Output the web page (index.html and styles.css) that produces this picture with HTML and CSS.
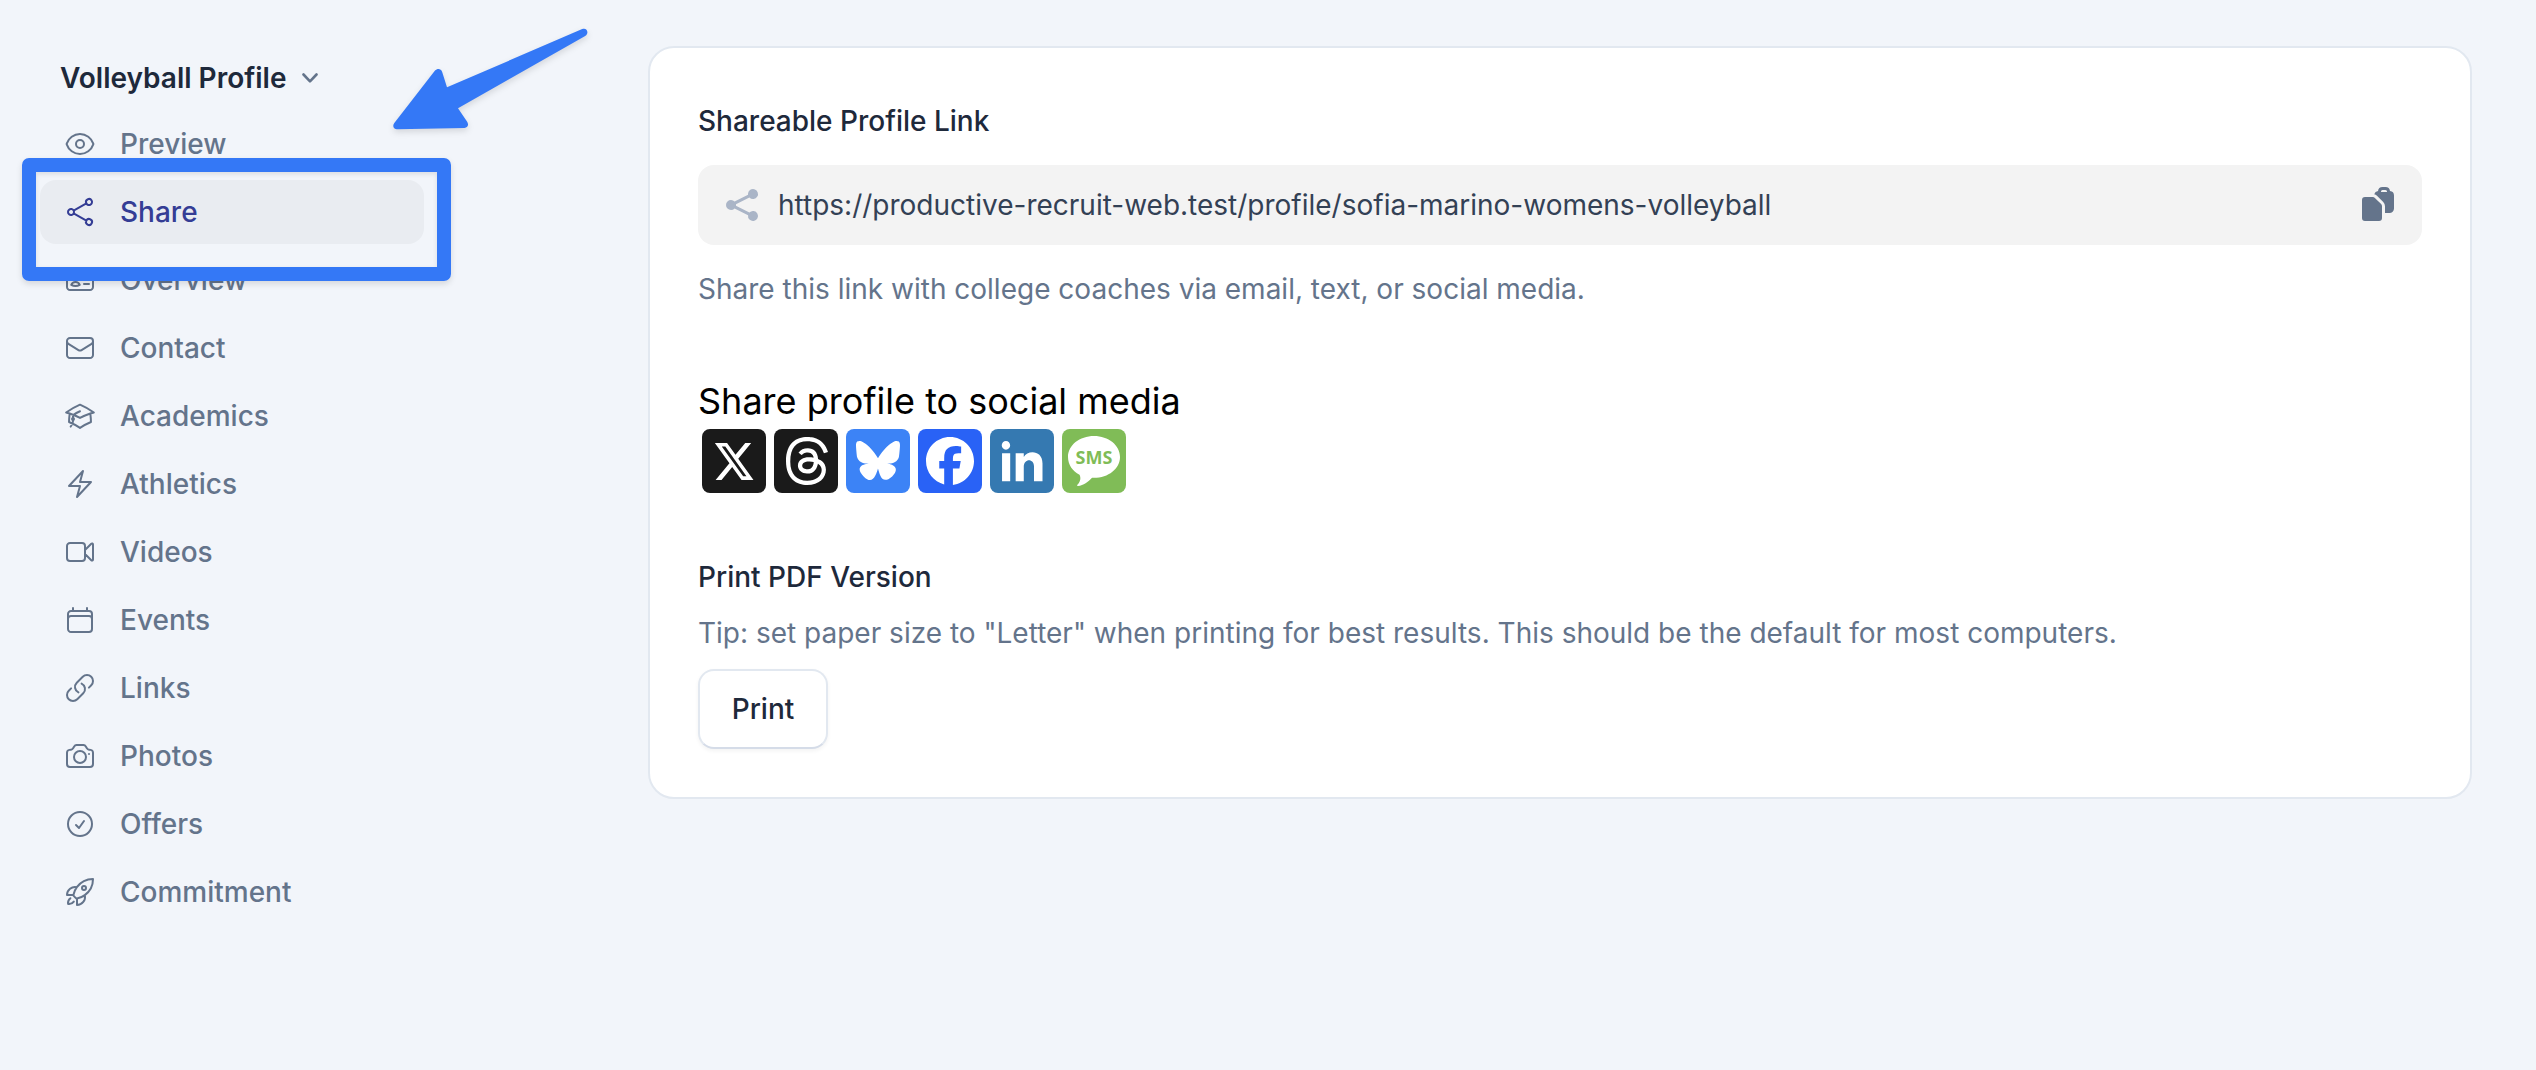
FILE: index.html
```
<!DOCTYPE html>
<html lang="en">
<head>
    <meta charset="UTF-8">
    <meta name="viewport" content="width=device-width, initial-scale=1.0">
    <title>Volleyball Profile - Share</title>

    <link rel="stylesheet" href="styles.css">
</head>
<body>

    <aside class="sidebar">
        <button type="button" class="profile-switch">
            Volleyball Profile
            <svg class="chevron" viewBox="0 0 16 10"><path d="M1.5 1.5 8 8.3l6.5-6.8"/></svg>
        </button>

        <nav class="menu">
            <a href="#" class="menu-item">
                <svg viewBox="0 0 24 24"><path d="M2.036 12.322a1.012 1.012 0 0 1 0-.639C3.423 7.51 7.36 4.5 12 4.5c4.638 0 8.573 3.007 9.963 7.178.07.207.07.431 0 .639C20.577 16.49 16.64 19.5 12 19.5c-4.638 0-8.573-3.007-9.963-7.178Z"/><path d="M15 12a3 3 0 1 1-6 0 3 3 0 0 1 6 0Z"/></svg>
                Preview
            </a>
            <a href="#" class="menu-item active">
                <svg viewBox="0 0 24 24"><path d="M7.217 10.907a2.25 2.25 0 1 0 0 2.186m0-2.186c.18.324.283.696.283 1.093s-.103.77-.283 1.093m0-2.186 9.566-5.314m-9.566 7.5 9.566 5.314m0 0a2.25 2.25 0 1 0 3.935 2.186 2.25 2.25 0 0 0-3.935-2.186Zm0-12.814a2.25 2.25 0 1 0 3.933-2.185 2.25 2.25 0 0 0-3.933 2.185Z"/></svg>
                Share
                <span class="highlight-box"></span>
            </a>
            <a href="#" class="menu-item">
                <svg viewBox="0 0 24 24"><path d="M15 9h3.75M15 12h3.75M15 15h3.75M4.5 19.5h15a2.25 2.25 0 0 0 2.25-2.25V6.75A2.25 2.25 0 0 0 19.5 4.5h-15a2.25 2.25 0 0 0-2.25 2.25v10.5A2.25 2.25 0 0 0 4.5 19.5Zm6-10.125a1.875 1.875 0 1 1-3.75 0 1.875 1.875 0 0 1 3.75 0Zm1.294 6.336a6.721 6.721 0 0 1-3.17.789 6.721 6.721 0 0 1-3.168-.789 3.376 3.376 0 0 1 6.338 0Z"/></svg>
                Overview
            </a>
            <a href="#" class="menu-item">
                <svg viewBox="0 0 24 24"><path d="M21.75 6.75v10.5a2.25 2.25 0 0 1-2.25 2.25h-15a2.25 2.25 0 0 1-2.25-2.25V6.75m19.5 0A2.25 2.25 0 0 0 19.5 4.5h-15a2.25 2.25 0 0 0-2.25 2.25m19.5 0v.243a2.25 2.25 0 0 1-1.07 1.916l-7.5 4.615a2.25 2.25 0 0 1-2.36 0L3.32 8.91a2.25 2.25 0 0 1-1.07-1.916V6.75"/></svg>
                Contact
            </a>
            <a href="#" class="menu-item">
                <svg viewBox="0 0 24 24"><path d="M4.26 10.147a60.438 60.438 0 0 0-.491 6.347A48.62 48.62 0 0 1 12 20.904a48.62 48.62 0 0 1 8.232-4.41 60.46 60.46 0 0 0-.491-6.347m-15.482 0a50.636 50.636 0 0 0-2.658-.813A59.906 59.906 0 0 1 12 3.493a59.903 59.903 0 0 1 10.399 5.84c-.896.248-1.783.52-2.658.814m-15.482 0A50.717 50.717 0 0 1 12 13.489a50.702 50.702 0 0 1 7.74-3.342M6.75 15a.75.75 0 1 0 0-1.5.75.75 0 0 0 0 1.5Zm0 0v-3.675A55.378 55.378 0 0 1 12 8.443m-7.007 11.55A5.981 5.981 0 0 0 6.75 15.75v-1.5"/></svg>
                Academics
            </a>
            <a href="#" class="menu-item">
                <svg viewBox="0 0 24 24"><path d="m3.75 13.5 10.5-11.25L12 10.5h8.25L9.75 21.75 12 13.5H3.75Z"/></svg>
                Athletics
            </a>
            <a href="#" class="menu-item">
                <svg viewBox="0 0 24 24"><path d="m15.75 10.5 4.72-4.72a.75.75 0 0 1 1.28.53v11.38a.75.75 0 0 1-1.28.53l-4.72-4.72M4.5 18.75h9a2.25 2.25 0 0 0 2.25-2.25v-9a2.25 2.25 0 0 0-2.25-2.25h-9A2.25 2.25 0 0 0 2.25 7.5v9a2.25 2.25 0 0 0 2.25 2.25Z"/></svg>
                Videos
            </a>
            <a href="#" class="menu-item">
                <svg viewBox="0 0 24 24"><path d="M6.75 3v2.25M17.25 3v2.25M3 18.75V7.5a2.25 2.25 0 0 1 2.25-2.25h13.5A2.25 2.25 0 0 1 21 7.5v11.25m-18 0A2.25 2.25 0 0 0 5.25 21h13.5A2.25 2.25 0 0 0 21 18.75m-18 0v-7.5A2.25 2.25 0 0 1 5.25 9h13.5A2.25 2.25 0 0 1 21 11.25v7.5"/></svg>
                Events
            </a>
            <a href="#" class="menu-item">
                <svg viewBox="0 0 24 24"><path d="M13.19 8.688a4.5 4.5 0 0 1 1.242 7.244l-4.5 4.5a4.5 4.5 0 0 1-6.364-6.364l1.757-1.757m13.35-.622 1.757-1.757a4.5 4.5 0 0 0-6.364-6.364l-4.5 4.5a4.5 4.5 0 0 0 1.242 7.244"/></svg>
                Links
            </a>
            <a href="#" class="menu-item">
                <svg viewBox="0 0 24 24"><path d="M6.827 6.175A2.31 2.31 0 0 1 5.186 7.23c-.38.054-.757.112-1.134.175C2.999 7.58 2.25 8.507 2.25 9.574V18a2.25 2.25 0 0 0 2.25 2.25h15A2.25 2.25 0 0 0 21.75 18V9.574c0-1.067-.75-1.994-1.802-2.169a47.865 47.865 0 0 0-1.134-.175 2.31 2.31 0 0 1-1.64-1.055l-.822-1.316a2.192 2.192 0 0 0-1.736-1.039 48.774 48.774 0 0 0-5.232 0 2.192 2.192 0 0 0-1.736 1.039l-.821 1.316Z"/><path d="M16.5 12.75a4.5 4.5 0 1 1-9 0 4.5 4.5 0 0 1 9 0ZM18.75 10.5h.008v.008h-.008V10.5Z"/></svg>
                Photos
            </a>
            <a href="#" class="menu-item">
                <svg viewBox="0 0 24 24"><path d="M9 12.75 11.25 15 15 9.75M21 12a9 9 0 1 1-18 0 9 9 0 0 1 18 0Z"/></svg>
                Offers
            </a>
            <a href="#" class="menu-item">
                <svg viewBox="0 0 24 24"><path d="M15.59 14.37a6 6 0 0 1-5.84 7.38v-4.8m5.84-2.58a14.98 14.98 0 0 0 6.16-12.12A14.98 14.98 0 0 0 9.631 8.41m5.96 5.96a14.926 14.926 0 0 1-5.841 2.58m-.119-8.54a6 6 0 0 0-7.381 5.84h4.8m2.581-5.84a14.927 14.927 0 0 0-2.58 5.84m2.699 2.7c-.103.021-.207.041-.311.06a15.09 15.09 0 0 1-2.448-2.448 14.9 14.9 0 0 1 .06-.312m-2.24 2.39a4.493 4.493 0 0 0-1.757 4.306 4.493 4.493 0 0 0 4.306-1.758M16.5 9a1.5 1.5 0 1 1-3 0 1.5 1.5 0 0 1 3 0Z"/></svg>
                Commitment
            </a>
        </nav>
    </aside>

    <main class="card">
        <h2>Shareable Profile Link</h2>
        <div class="link-field">
            <svg class="link-share" viewBox="0 0 20 20"><path d="M13 4.5a2.5 2.5 0 1 1 .702 1.737L6.97 9.604a2.518 2.518 0 0 1 0 .792l6.733 3.367a2.5 2.5 0 1 1-.671 1.341l-6.733-3.367a2.5 2.5 0 1 1 0-3.475l6.733-3.366A2.52 2.52 0 0 1 13 4.5Z"/></svg>
            <span class="link-url">https://productive-recruit-web.test/profile/sofia-marino-womens-volleyball</span>
            <svg class="link-copy" viewBox="0 0 20 20">
                <path fill-rule="evenodd" d="M15.988 3.012A2.25 2.25 0 0 1 18 5.25v6.5A2.25 2.25 0 0 1 15.75 14H13.5v-3.379a3 3 0 0 0-.879-2.121l-3.12-3.121a3 3 0 0 0-1.402-.791 2.252 2.252 0 0 1 1.913-1.576A2.25 2.25 0 0 1 12.25 1h1.5a2.25 2.25 0 0 1 2.238 2.012ZM11.5 3.25a.75.75 0 0 1 .75-.75h1.5a.75.75 0 0 1 .75.75v.25h-3v-.25Z"/>
                <path d="M3.5 6A1.5 1.5 0 0 0 2 7.5v9A1.5 1.5 0 0 0 3.5 18h7a1.5 1.5 0 0 0 1.5-1.5v-5.879a1.5 1.5 0 0 0-.44-1.06L8.44 6.439A1.5 1.5 0 0 0 7.378 6H3.5Z"/>
            </svg>
        </div>
        <p class="hint">Share this link with college coaches via email, text, or social media.</p>

        <h3>Share profile to social media</h3>
        <div class="social">
            <a href="#" class="social-btn x">
                <svg viewBox="0 0 64 64"><path transform="translate(10.6 9.7) scale(1.79 1.9)" d="M18.244 2.25h3.308l-7.227 8.26 8.502 11.24H16.17l-5.214-6.817L4.99 21.75H1.68l7.73-8.835L1.254 2.25H8.08l4.713 6.231zm-1.161 17.52h1.833L7.084 4.126H5.117z"/></svg>
            </a>
            <a href="#" class="social-btn threads">
                <svg viewBox="0 0 64 64"><path transform="translate(9 8) scale(3)" d="M6.321 6.016c-.27-.18-1.166-.802-1.166-.802.756-1.081 1.753-1.502 3.132-1.502.975 0 1.803.327 2.394.948s.928 1.509 1.005 2.644q.492.207.905.484c1.109.745 1.719 1.86 1.719 3.137 0 2.716-2.226 5.075-6.256 5.075C4.594 16 1 13.987 1 7.994 1 2.034 4.482 0 8.044 0 9.69 0 13.55.243 15 5.036l-1.36.353C12.516 1.974 10.163 1.43 8.006 1.43c-3.565 0-5.582 2.171-5.582 6.79 0 4.143 2.254 6.343 5.63 6.343 2.777 0 4.847-1.443 4.847-3.556 0-1.438-1.208-2.127-1.27-2.127-.236 1.234-.868 3.31-3.644 3.31-1.618 0-3.013-1.118-3.013-2.582 0-2.09 1.984-2.847 3.55-2.847.586 0 1.294.04 1.663.114 0-.637-.54-1.728-1.9-1.728-1.25 0-1.566.405-1.967.868ZM8.716 8.19c-2.04 0-2.304.87-2.304 1.416 0 .878 1.043 1.168 1.6 1.168 1.02 0 2.067-.282 2.232-2.423a6.2 6.2 0 0 0-1.528-.161"/></svg>
            </a>
            <a href="#" class="social-btn bluesky">
                <svg viewBox="0 0 64 64"><path transform="translate(10 9.5) scale(1.833)" d="M12 10.8c-1.087-2.114-4.046-6.053-6.798-7.995C2.566.944 1.561 1.266.902 1.565.139 1.908 0 3.08 0 3.768c0 .69.378 5.65.624 6.479.815 2.736 3.713 3.66 6.383 3.364-3.912.58-7.387 2.005-2.83 7.078 5.013 5.19 6.87-1.113 7.823-4.308.953 3.195 2.05 9.271 7.733 4.308 4.267-4.308 1.172-6.498-2.74-7.078 2.67.297 5.568-.628 6.383-3.364.246-.828.624-5.79.624-6.478 0-.69-.139-1.861-.902-2.206-.659-.298-1.664-.62-4.3 1.24C16.046 4.748 13.087 8.687 12 10.8Z"/></svg>
            </a>
            <a href="#" class="social-btn facebook">
                <svg viewBox="0 0 64 64"><path transform="translate(8 8) scale(2)" d="M9.101 23.691v-7.98H6.627v-3.667h2.474v-1.58c0-4.085 1.848-5.978 5.858-5.978.401 0 .955.042 1.468.103a8.68 8.68 0 0 1 1.141.195v3.325a8.623 8.623 0 0 0-.653-.036 26.805 26.805 0 0 0-.733-.009c-.707 0-1.259.096-1.675.309a1.686 1.686 0 0 0-.679.622c-.258.42-.374.995-.374 1.752v1.297h3.919l-.386 2.103-.287 1.564h-3.246v8.245C19.396 23.238 24 18.179 24 12.044c0-6.627-5.373-12-12-12s-12 5.373-12 12c0 5.628 3.874 10.35 9.101 11.647Z"/></svg>
            </a>
            <a href="#" class="social-btn linkedin">
                <svg viewBox="0 0 64 64"><path transform="translate(11.7 10.2) scale(1.7 1.755)" d="M4.98 3.5c0 1.38-1.11 2.5-2.48 2.5S.02 4.88.02 3.5 1.13 1 2.5 1s2.48 1.12 2.48 2.5zM5 8H.2v16H5V8zm7.982 0H8.214v16h4.769v-8.399c0-4.67 6.029-5.052 6.029 0V24H24V13.869c0-7.88-8.922-7.593-11.018-3.714V8z"/></svg>
            </a>
            <a href="#" class="social-btn sms">
                <svg viewBox="0 0 64 64">
                    <path d="M32 7c14.400 0 26 9.300 26 20.900s-11.600 20.900-26 20.900l-2-.100c-3.800 4.300-8.500 7.600-14 8.300-1 .100-1.200-.600-.600-1.200 2.800-2.800 3.900-6.500 2.100-10C10.500 42 6 35.500 6 27.900 6 16.300 17.600 7 32 7Z"/>
                    <text x="32" y="34.800">SMS</text>
                </svg>
            </a>
        </div>

        <h2 class="print-title">Print PDF Version</h2>
        <p class="tip">Tip: set paper size to "Letter" when printing for best results. This should be the default for most computers.</p>
        <button type="button" class="print-btn">Print</button>
    </main>

    <svg class="arrow" viewBox="0 0 220 130">
        <path d="M198.200 9.100 63 67.300 58.100 51.700C57 48.200 53 48.200 51 50.600L10.300 102.900C8 106 9.800 109.500 13.200 109.300L80.500 108C84 107.800 85 104.500 83 101.500L74 88.300 201.200 16C205.500 13 203 7.200 198.200 9.100Z"/>
    </svg>

</body>
</html>
```
FILE: styles.css
```
* {
    box-sizing: border-box;
}

body {
    font-family: Inter, "Liberation Sans", sans-serif;
    font-size: 28px;
    line-height: 40px;
    background-color: #f2f5fa;
    color: #1e293b;
    margin: 0;
    height: 100vh;
    display: flex;
    align-items: flex-start;
    gap: 224px;
    padding: 46px 64px 0 40px;
    overflow: hidden;
}

h2, h3, p {
    margin: 0;
}

button {
    font: inherit;
    color: inherit;
    cursor: pointer;
}

.sidebar {
    width: 384px;
    flex: none;
    padding-top: 12px;
}

.profile-switch {
    display: flex;
    align-items: center;
    gap: 16px;
    padding: 0 20px;
    border: none;
    background: none;
    font-weight: 600;
}

.chevron {
    width: 16px;
    height: 10px;
    fill: none;
    stroke: #64748b;
    stroke-width: 2.6;
    stroke-linecap: round;
    stroke-linejoin: round;
}

.menu {
    display: flex;
    flex-direction: column;
    gap: 4px;
    margin-top: 14px;
}

.menu-item {
    position: relative;
    display: flex;
    align-items: center;
    gap: 24px;
    height: 64px;
    padding: 0 24px;
    border-radius: 16px;
    color: #64748b;
    font-weight: 500;
    text-decoration: none;
}

.menu-item svg {
    width: 32px;
    height: 32px;
    fill: none;
    stroke: currentColor;
    stroke-width: 1.5;
    stroke-linecap: round;
    stroke-linejoin: round;
}

.menu-item.active {
    background: #e9ecf1;
    color: #343d95;
}

/* callout drawn over the active item */
.highlight-box {
    position: absolute;
    z-index: 1;
    top: -22px;
    left: -18px;
    width: 429px;
    height: 123px;
    border: 14px solid #3478f6;
    border-radius: 7px;
    box-shadow: 0 3px 6px rgba(0, 0, 0, 0.12), inset 0 2px 5px rgba(0, 0, 0, 0.1);
}

.arrow {
    position: absolute;
    top: 20px;
    left: 384px;
    width: 220px;
    height: 130px;
    fill: #3478f6;
    filter: drop-shadow(0 3px 3px rgba(0, 0, 0, 0.12));
}

.card {
    flex: 1;
    height: 753px;
    padding: 53px 48px 0;
    background: white;
    border: 2px solid #e2e8f0;
    border-radius: 26px;
}

h2 {
    font-size: 28px;
    font-weight: 500;
}

.link-field {
    display: flex;
    align-items: center;
    gap: 16px;
    height: 80px;
    margin-top: 24px;
    padding: 0 24px;
    background: #f3f3f3;
    border-radius: 16px;
}

.link-field svg {
    width: 40px;
    height: 40px;
    flex: none;
}

.link-share {
    fill: #aab5c7;
}

.link-url {
    flex: 1;
    color: #334155;
}

.link-copy {
    fill: #64748b;
}

.hint {
    margin-top: 24px;
    color: #64748b;
}

h3 {
    margin-top: 64px;
    font-size: 36px;
    line-height: 56px;
    font-weight: 400;
    color: black;
}

.social {
    display: flex;
    gap: 8px;
    padding: 0 4px;
}

.social-btn {
    width: 64px;
    height: 64px;
    border-radius: 8px;
    overflow: hidden;
}

.social-btn svg {
    display: block;
    width: 64px;
    height: 64px;
    fill: white;
}

.x, .threads {
    background: #1a1a1a;
}

.bluesky {
    background: #3c83f6;
}

.facebook {
    background: #2962f6;
}

.linkedin {
    background: #3579b1;
}

.sms {
    background: #80bc57;
}

.sms text {
    fill: #80bc57;
    font-family: "Open Sans", sans-serif;
    font-size: 18px;
    font-weight: 700;
    text-anchor: middle;
}

.print-title {
    margin-top: 64px;
}

.tip {
    margin-top: 16px;
    color: #64748b;
}

.print-btn {
    display: block;
    width: 130px;
    height: 80px;
    margin-top: 16px;
    padding: 0;
    background: white;
    border: 2px solid #e2e8f0;
    border-bottom-color: #d5dce8;
    border-radius: 16px;
    box-shadow: 0 2px 4px rgba(0, 0, 0, 0.05);
    font-weight: 500;
}
```
